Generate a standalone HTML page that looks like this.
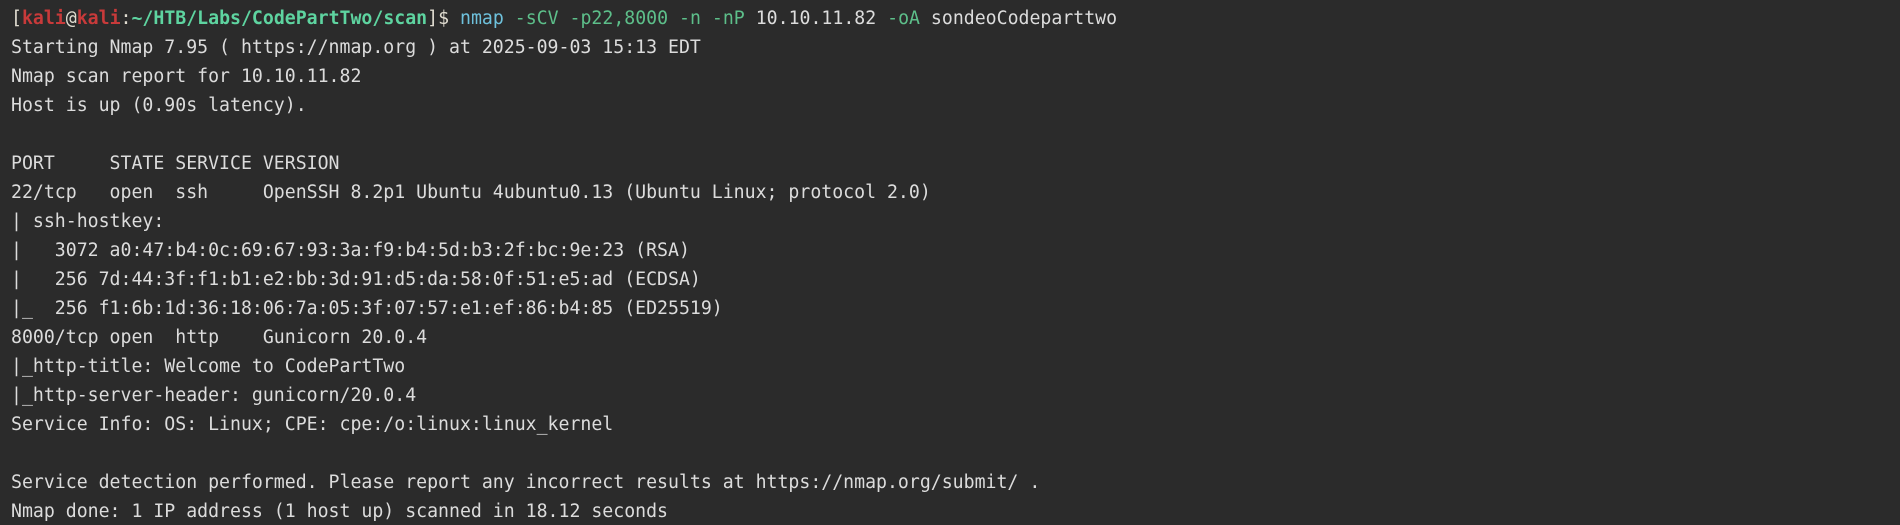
<!DOCTYPE html>
<html><head><meta charset="utf-8"><style>
html,body{margin:0;padding:0;background:#2b2b2b;width:1900px;height:525px;overflow:hidden}
pre{margin:0;padding:4px 0 0 11px;font-family:"DejaVu Sans Mono","Liberation Mono",monospace;font-size:18.2px;line-height:29px;color:#dcdcdc;white-space:pre}
.r{color:#c83a3a;font-weight:bold}.g{color:#5ed4a0;font-weight:bold}.w{color:#e0dcd0}.b{color:#6ec1dc}.f{color:#5dbf8a}
</style></head><body><pre><span class="w">[</span><span class="r">kali</span><span class="w">@</span><span class="r">kali</span><span class="w">:</span><span class="g">~/HTB/Labs/CodePartTwo/scan</span><span class="w">]$</span> <span class="b">nmap</span> <span class="f">-sCV</span> <span class="f">-p22,8000</span> <span class="f">-n</span> <span class="f">-nP</span> 10.10.11.82 <span class="f">-oA</span> sondeoCodeparttwo
Starting Nmap 7.95 ( https://nmap.org ) at 2025-09-03 15:13 EDT
Nmap scan report for 10.10.11.82
Host is up (0.90s latency).

PORT     STATE SERVICE VERSION
22/tcp   open  ssh     OpenSSH 8.2p1 Ubuntu 4ubuntu0.13 (Ubuntu Linux; protocol 2.0)
| ssh-hostkey: 
|   3072 a0:47:b4:0c:69:67:93:3a:f9:b4:5d:b3:2f:bc:9e:23 (RSA)
|   256 7d:44:3f:f1:b1:e2:bb:3d:91:d5:da:58:0f:51:e5:ad (ECDSA)
|_  256 f1:6b:1d:36:18:06:7a:05:3f:07:57:e1:ef:86:b4:85 (ED25519)
8000/tcp open  http    Gunicorn 20.0.4
|_http-title: Welcome to CodePartTwo
|_http-server-header: gunicorn/20.0.4
Service Info: OS: Linux; CPE: cpe:/o:linux:linux_kernel

Service detection performed. Please report any incorrect results at https://nmap.org/submit/ .
Nmap done: 1 IP address (1 host up) scanned in 18.12 seconds</pre></body></html>
